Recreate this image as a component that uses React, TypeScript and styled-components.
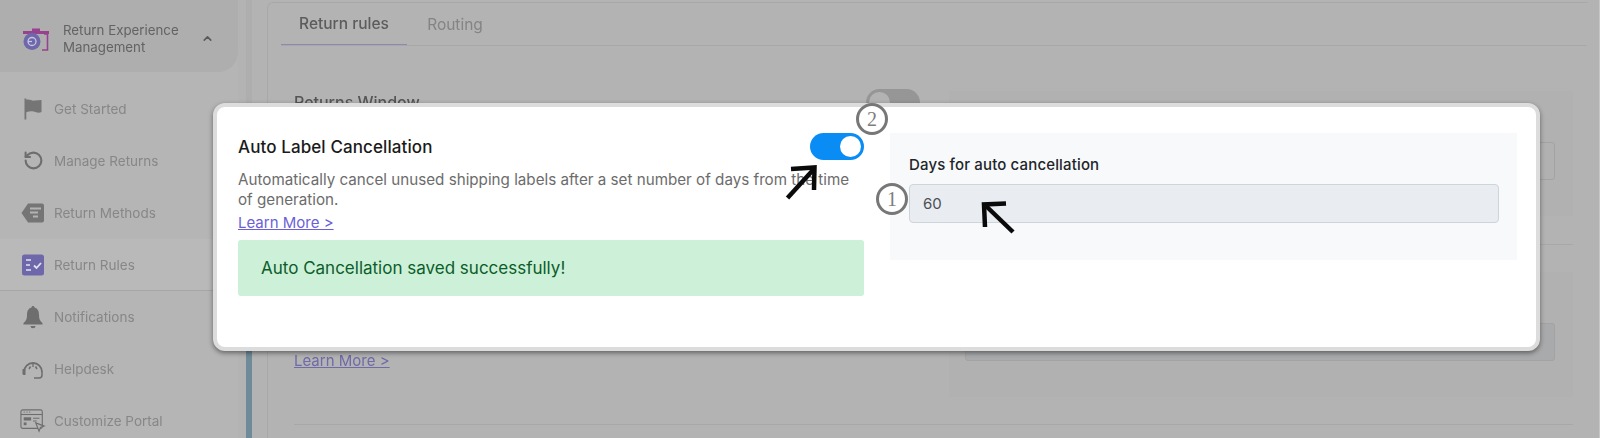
import styled, { createGlobalStyle } from "styled-components";
import { ChevronUp, RotateCcw } from "lucide-react";

const GlobalStyle = createGlobalStyle`
  html, body {
    margin: 0;
    padding: 0;
    background: #b3b3b3;
    font-family: Inter, "Liberation Sans", sans-serif;
    overflow: hidden;
  }
`;

const FlagIcon = () => (
  <svg width="20" height="22" viewBox="0 0 20 22">
    <path d="M1.500 0.500h1.800v1.200c3 -1 6 1.500 8.500 0.800l6.700-0.500v12c-3 1.500-5.500 0-8-0.500-2.500-0.500-5 0-7.200 0.800V21.500H1.500z" fill="#757575" />
  </svg>
);

const MethodsIcon = () => (
  <svg width="24" height="20" viewBox="0 0 24 20">
    <path d="M7 0.500h14a2 2 0 0 1 2 2v15a2 2 0 0 1-2 2H7l-6.500-9.500z" fill="#757575" />
    <path d="M9 5.500h11M9 9.500h8M12 13.500h5" stroke="#b3b3b3" strokeWidth="2" fill="none" />
  </svg>
);

const RulesIcon = () => (
  <svg width="24" height="22" viewBox="0 0 24 22">
    <rect x="1" y="0.500" width="22" height="21" rx="2.500" fill="#6e68ab" />
    <path d="M5 6h5M5 11h4M5 16h5" stroke="#c5c3de" strokeWidth="1.800" fill="none" />
    <path d="M13 11.500l2.500 2.500 4.500-5" stroke="#e3e2ef" strokeWidth="1.800" fill="none" />
  </svg>
);

const BellIcon = () => (
  <svg width="22" height="24" viewBox="0 0 22 24">
    <path d="M11 1c1 0 1.500 0.700 1.500 1.500 3.500 1 4.500 4 4.500 7.500 0 4 1 6 3.500 8v1.500h-19V18c2.500-2 3.500-4 3.500-8 0-3.500 1-6.500 4.500-7.500C9.500 1.700 10 1 11 1z" fill="#6e6e6e" />
    <path d="M8.500 21h5a2.500 2.200 0 0 1-5 0z" fill="#6e6e6e" />
  </svg>
);

const HelpdeskIcon = () => (
  <svg width="24" height="22" viewBox="0 0 24 22">
    <path d="M3 14a9 9 0 0 1 18 0" stroke="#6e6e6e" strokeWidth="1.800" fill="none" />
    <path d="M21 14v3a3 3 0 0 1-3 3h-5" stroke="#6e6e6e" strokeWidth="1.500" fill="none" />
    <path d="M1.500 11h3v6H3a1.500 1.500 0 0 1-1.500-1.500z" fill="#6e6e6e" />
    <path d="M8 11l1.500-2.500M16 11l-1.500-2.500" stroke="#6e6e6e" strokeWidth="1.500" />
    <path d="M12 6v3" stroke="#6e6e6e" strokeWidth="1.300" />
  </svg>
);

const PortalIcon = () => (
  <svg width="28" height="26" viewBox="0 0 28 26">
    <rect x="1" y="1" width="23" height="20" rx="2" stroke="#6e6e6e" strokeWidth="1.200" fill="none" />
    <path d="M1 6h23" stroke="#6e6e6e" strokeWidth="1.200" />
    <path d="M4 3.500h1M7 3.500h1M10 3.500h1" stroke="#6e6e6e" strokeWidth="1.200" />
    <rect x="4" y="9" width="8" height="3.500" fill="#6e6e6e" />
    <rect x="4" y="14.500" width="3" height="3" fill="#6e6e6e" />
    <path d="M14 10h7M14 13h4" stroke="#6e6e6e" strokeWidth="1.200" />
    <path d="M17 15l9 3.500-4 1.500-1.500 4z" stroke="#6e6e6e" strokeWidth="1.200" fill="#b3b3b3" />
  </svg>
);

const LogoIcon = () => (
  <svg width="28" height="26" viewBox="0 0 28 26">
    <path d="M1 5h26v3H1z" fill="#98428f" />
    <path d="M10 5V2.500h8V5" fill="#98428f" />
    <circle cx="10" cy="15.500" r="8.500" fill="#6e68ab" />
    <circle cx="10" cy="15.500" r="4" stroke="#c8c6e2" strokeWidth="1.300" fill="none" />
    <path d="M6 15.500h4" stroke="#c8c6e2" strokeWidth="1.300" />
    <path d="M22 8h3.500v16H20" stroke="#98428f" strokeWidth="1.600" fill="none" />
  </svg>
);

const ToggleArrow = () => (
  <svg width="34" height="36" viewBox="0 0 34 36">
    <path d="M2.500 33L28 5" stroke="#0a0a0a" strokeWidth="4.500" fill="none" />
    <path d="M6 4L29.500 2.500L29 25" stroke="#0a0a0a" strokeWidth="4.500" fill="none" />
  </svg>
);

const InputArrow = () => (
  <svg width="34" height="34" viewBox="0 0 34 34">
    <path d="M32 31L5 5" stroke="#0a0a0a" strokeWidth="4.500" fill="none" />
    <path d="M25 2.500L3 3.500L4 26" stroke="#0a0a0a" strokeWidth="4.500" fill="none" />
  </svg>
);

const navItems = [
  { label: "Get Started", icon: <FlagIcon /> },
  { label: "Manage Returns", icon: <RotateCcw size={21} color="#6e6e6e" strokeWidth={2.4} /> },
  { label: "Return Methods", icon: <MethodsIcon /> },
  { label: "Return Rules", icon: <RulesIcon />, active: true },
  { label: "Notifications", icon: <BellIcon /> },
  { label: "Helpdesk", icon: <HelpdeskIcon /> },
  { label: "Customize Portal", icon: <PortalIcon /> },
];

export default function App() {
  return (
    <>
      <GlobalStyle />
      <Page>
        <Sidebar>
          <Brand>
            <LogoIcon />
            <BrandName>
              Return Experience
              <br />
              Management
            </BrandName>
            <ChevronUp size={13} color="#5a5a5a" strokeWidth={3} />
          </Brand>
          <Nav>
            {navItems.map((item) => (
              <NavRow key={item.label} $active={item.active}>
                <NavIcon>{item.icon}</NavIcon>
                {item.label}
              </NavRow>
            ))}
          </Nav>
        </Sidebar>
        <Track>
          <Thumb />
        </Track>
        <Card>
          <Tabs>
            <Tab $active>Return rules</Tab>
            <Tab>Routing</Tab>
          </Tabs>
          <Section>
            <SectionLeft>
              <SectionTitle>Returns Window</SectionTitle>
              <GhostToggle>
                <GhostKnob />
              </GhostToggle>
            </SectionLeft>
            <GhostPanel>
              <GhostInput />
            </GhostPanel>
          </Section>
          <Section>
            <SectionLeft $bottom>
              <GhostLink>Learn More &gt;</GhostLink>
            </SectionLeft>
            <GhostPanel>
              <GhostInput $filled />
            </GhostPanel>
          </Section>
        </Card>
      </Page>

      <Modal>
        <ModalLeft>
          <TitleRow>
            <Title>Auto Label Cancellation</Title>
            <Toggle>
              <Knob />
            </Toggle>
          </TitleRow>
          <Description>
            Automatically cancel unused shipping labels after a set number of days from the time
            of generation.
          </Description>
          <LearnMore>Learn More &gt;</LearnMore>
          <Alert>Auto Cancellation saved successfully!</Alert>
        </ModalLeft>
        <ModalPanel>
          <FieldLabel>Days for auto cancellation</FieldLabel>
          <Field>60</Field>
        </ModalPanel>
        <Badge $x={639} $y={-4}>2</Badge>
        <Badge $x={659} $y={76}>1</Badge>
        <Pointer $x={568} $y={58}>
          <ToggleArrow />
        </Pointer>
        <Pointer $x={764} $y={94}>
          <InputArrow />
        </Pointer>
      </Modal>
    </>
  );
}

const Page = styled.div`
  width: 1600px;
  height: 438px;
  box-sizing: border-box;
  display: flex;
  overflow: hidden;
  background: #b3b3b3;
  border-right: 1px solid #c6c6c6;
  filter: blur(0.4px);
`;

const Sidebar = styled.aside`
  width: 238px;
  flex-shrink: 0;
  background: #b5b5b5;
  display: flex;
  flex-direction: column;
`;

const Brand = styled.div`
  height: 72px;
  flex-shrink: 0;
  box-sizing: border-box;
  padding: 5px 24px 0 22px;
  display: flex;
  align-items: center;
  background: #aeaeae;
  border-radius: 0 0 20px 0;
  color: #636363;
  font-size: 13.300px;
  line-height: 17px;
`;

const BrandName = styled.div`
  flex: 1;
  margin-left: 13px;
`;

const Nav = styled.nav`
  padding-top: 11px;
  flex-shrink: 0;
  display: flex;
  flex-direction: column;
`;

const NavRow = styled.div<{ $active?: boolean }>`
  height: 52px;
  box-sizing: border-box;
  padding-left: 20px;
  display: flex;
  align-items: center;
  gap: 8px;
  font-size: 13.500px;
  color: #878787;
  background: ${(p) => (p.$active ? "#b9b9b9" : "transparent")};
  border-bottom: 1px solid ${(p) => (p.$active ? "#a6a6a6" : "transparent")};
`;

const NavIcon = styled.span`
  width: 26px;
  display: flex;
  justify-content: center;
  flex-shrink: 0;
`;

const Track = styled.div`
  width: 6px;
  margin-left: 8px;
  flex-shrink: 0;
  background: #aeaeae;
  display: flex;
  flex-direction: column;
  justify-content: flex-end;
`;

const Thumb = styled.div`
  height: 180px;
  background: #6f8a99;
`;

const Card = styled.main`
  width: 1319px;
  margin: 2px 0 0 15px;
  border: 1px solid #a8a8a8;
  border-right-color: transparent;
  border-bottom: none;
  border-radius: 6px 0 0 0;
  flex-shrink: 0;
`;

const Tabs = styled.div`
  height: 42px;
  margin: 0 0 0 13px;
  display: flex;
  border-bottom: 1px solid #a8a8a8;
`;

const Tab = styled.div<{ $active?: boolean }>`
  width: 126px;
  height: 42px;
  box-sizing: border-box;
  display: flex;
  align-items: center;
  justify-content: center;
  margin-right: ${(p) => (p.$active ? "-15px" : "0")};
  font-size: 15.500px;
  font-weight: ${(p) => (p.$active ? 500 : 400)};
  color: ${(p) => (p.$active ? "#5c5c5c" : "#848484")};
  border-bottom: ${(p) => (p.$active ? "1px solid #8c8ab5" : "none")};
`;

const Section = styled.section`
  display: flex;
  margin: 0 14px 0 26px;
  padding: 27px 0;
  border-bottom: 1px solid #a8a8a8;
  gap: 29px;

  &:first-of-type {
    padding: 45px 0 28px;
  }
`;

const SectionLeft = styled.div<{ $bottom?: boolean }>`
  width: 626px;
  box-sizing: border-box;
  display: flex;
  justify-content: space-between;
  align-items: ${(p) => (p.$bottom ? "flex-end" : "flex-start")};
  padding-bottom: ${(p) => (p.$bottom ? "27px" : "0")};
`;

const SectionTitle = styled.div`
  font-size: 16px;
  font-weight: 500;
  color: #555;
  line-height: 22px;
`;

const GhostToggle = styled.div`
  width: 54px;
  height: 27px;
  margin-top: -2px;
  padding: 3px;
  box-sizing: border-box;
  border-radius: 14px;
  background: #969696;
`;

const GhostKnob = styled.div`
  width: 21px;
  height: 21px;
  border-radius: 50%;
  background: #b3b3b3;
`;

const GhostLink = styled.a`
  font-size: 15px;
  color: #6f6aa8;
  text-decoration: underline;
`;

const GhostPanel = styled.div`
  flex: 1;
  height: 125px;
  box-sizing: border-box;
  padding: 51px 18px 36px 16px;
  background: #b1b1b1;
`;

const GhostInput = styled.div<{ $filled?: boolean }>`
  height: 38px;
  box-sizing: border-box;
  border: 1px solid #a3a3a3;
  border-radius: 3px;
  background: ${(p) => (p.$filled ? "#a8aaac" : "transparent")};
`;

const Modal = styled.div`
  position: absolute;
  left: 213px;
  top: 103px;
  width: 1327px;
  height: 248px;
  box-sizing: border-box;
  padding: 26px 19px 0 21px;
  display: flex;
  gap: 26px;
  align-items: flex-start;
  background: #fff;
  border: 4px solid #dcdcdc;
  border-radius: 12px;
  box-shadow: 0 2px 5px rgba(0, 0, 0, 0.45);
`;

const ModalLeft = styled.div`
  width: 626px;
  flex-shrink: 0;
`;

const TitleRow = styled.div`
  height: 27px;
  display: flex;
  align-items: center;
  justify-content: space-between;
`;

const Title = styled.div`
  font-size: 17px;
  font-weight: 500;
  letter-spacing: 0.1px;
  color: #1a1a1a;
`;

const Toggle = styled.div`
  width: 54px;
  height: 27px;
  box-sizing: border-box;
  padding: 3px;
  display: flex;
  justify-content: flex-end;
  align-items: center;
  border-radius: 14px;
  background: #0a8cf5;
`;

const Knob = styled.div`
  width: 21px;
  height: 21px;
  border-radius: 50%;
  background: #fff;
`;

const Description = styled.p`
  margin: 10px 0 0;
  font-size: 15.200px;
  line-height: 20px;
  color: #6c6c6c;
`;

const LearnMore = styled.a`
  display: block;
  margin-top: 3px;
  font-size: 15px;
  line-height: 20px;
  color: #6a5fd8;
  text-decoration: underline;
`;

const Alert = styled.div`
  height: 56px;
  box-sizing: border-box;
  margin-top: 7px;
  padding-left: 23px;
  display: flex;
  align-items: center;
  background: #cdf0d8;
  border-radius: 3px;
  font-size: 17px;
  color: #0b5d2a;
`;

const ModalPanel = styled.div`
  flex: 1;
  height: 127px;
  box-sizing: border-box;
  padding: 23px 18px 0 19px;
  background: #f8f9fa;
`;

const FieldLabel = styled.div`
  font-size: 15px;
  font-weight: 500;
  letter-spacing: 0.15px;
  line-height: 17px;
  color: #212529;
`;

const Field = styled.div`
  height: 39px;
  box-sizing: border-box;
  margin-top: 11px;
  padding-left: 13px;
  display: flex;
  align-items: center;
  background: #e9ecf0;
  border: 1px solid #ced4da;
  border-radius: 4px;
  font-size: 15px;
  color: #495057;
`;

const Badge = styled.span<{ $x: number; $y: number }>`
  position: absolute;
  left: ${(p) => p.$x}px;
  top: ${(p) => p.$y}px;
  width: 32px;
  height: 32px;
  box-sizing: border-box;
  display: flex;
  align-items: center;
  justify-content: center;
  background: #fff;
  border: 3px solid #777;
  border-radius: 50%;
  font-family: "Liberation Serif", serif;
  font-size: 20px;
  color: #7d7d7d;
`;

const Pointer = styled.span<{ $x: number; $y: number }>`
  position: absolute;
  left: ${(p) => p.$x}px;
  top: ${(p) => p.$y}px;
  display: flex;
`;
